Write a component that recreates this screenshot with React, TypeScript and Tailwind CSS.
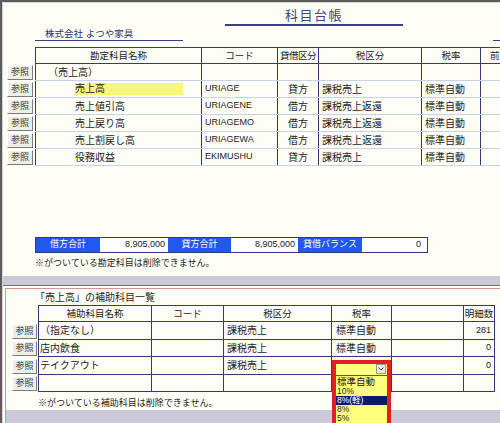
import React from "react";

const NAVY = "border-[#363a74]";

type MainRow = {
  name: string;
  code: string;
  side: string;
  tax: string;
  rate: string;
  indent: "group" | "item";
  highlight?: boolean;
};

const mainRows: MainRow[] = [
  { name: "（売上高）", code: "", side: "", tax: "", rate: "", indent: "group" },
  { name: "売上高", code: "URIAGE", side: "貸方", tax: "課税売上", rate: "標準自動", indent: "item", highlight: true },
  { name: "売上値引高", code: "URIAGENE", side: "借方", tax: "課税売上返還", rate: "標準自動", indent: "item" },
  { name: "売上戻り高", code: "URIAGEMO", side: "借方", tax: "課税売上返還", rate: "標準自動", indent: "item" },
  { name: "売上割戻し高", code: "URIAGEWA", side: "借方", tax: "課税売上返還", rate: "標準自動", indent: "item" },
  { name: "役務収益", code: "EKIMUSHU", side: "貸方", tax: "課税売上", rate: "標準自動", indent: "item" },
];

const subRows = [
  { name: "（指定なし）", code: "", tax: "課税売上", rate: "標準自動", count: "281", h: "h-[18px]" },
  { name: "店内飲食", code: "", tax: "課税売上", rate: "標準自動", count: "0", h: "h-[17px]" },
  { name: "テイクアウト", code: "", tax: "課税売上", rate: "", count: "0", h: "h-[18px]" },
  { name: "", code: "", tax: "", rate: "", count: "", h: "h-[17px]" },
];

const RefButton = ({ className }: { className: string }) => (
  <div
    className={`h-[15px] flex items-center justify-center bg-[#efeee9] border border-t-white border-l-white border-r-[#7a7a7a] border-b-[#7a7a7a] text-[9px] text-[#333] leading-none ${className}`}
  >
    参照
  </div>
);

const App = () => {
  return (
    <div className="relative w-[500px] h-[423px] overflow-hidden border-l-2 border-t-2 border-[#5c5c5c] bg-[#fffef6] text-[#222] font-['Liberation_Sans','Noto_Sans_CJK_JP',sans-serif]">
      <div className="h-full border-l border-t border-[#d6d6d6] flex flex-col">
        {/* upper panel */}
        <div className="flex flex-col">
          <div className="ml-[222px] w-[178px] pt-[4px] h-[23px] border-b-2 border-[#3a3e78] text-center text-[13px] leading-[17px] tracking-[1.5px] text-[#3d4284]">
            科目台帳
          </div>
          <div className="flex mt-[3px]">
            <div className="ml-[32px] w-[148px] h-[12px] border-b border-[#3a3e78] pl-[10px] text-[9.5px] leading-[10px] text-[#2c2f6e]">
              株式会社 よつや家具
            </div>
            <div className="ml-auto w-[7px] border-b border-[#3a3e78]" />
          </div>

          {/* main table */}
          <div className="mt-[6px] flex flex-col text-[10px]">
            <div className="flex h-[17px]">
              <div className="w-[32px] shrink-0" />
              <div className={`flex border-t border-b ${NAVY} text-[9.5px]`}>
                {[
                  ["勘定科目名称", "w-[167px] border-l"],
                  ["コード", "w-[76px]"],
                  ["貸借区分", "w-[41px] tracking-[-0.5px]"],
                  ["税区分", "w-[103px]"],
                  ["税率", "w-[59px]"],
                  ["前", "w-[40px] justify-start pl-[9px]"],
                ].map(([label, w]) => (
                  <div
                    key={label}
                    className={`${w} shrink-0 border-r ${NAVY} flex items-center justify-center leading-none whitespace-nowrap overflow-hidden`}
                  >
                    {label}
                  </div>
                ))}
              </div>
            </div>
            {mainRows.map((r, i) => (
              <div key={i} className="flex h-[17px]">
                <div className="w-[32px] shrink-0 flex items-center">
                  <RefButton className="ml-[4px] w-[26px]" />
                </div>
                <div className="flex border-b border-[#c3d3ec]">
                  <div className={`w-[167px] shrink-0 border-l border-r ${NAVY} flex items-center`}>
                    {r.highlight ? (
                      <span className="ml-[39px] w-[108px] h-[12px] bg-[#f8f878] leading-[12px]">{r.name}</span>
                    ) : (
                      <span className={r.indent === "group" ? "ml-[12px]" : "ml-[39px]"}>{r.name}</span>
                    )}
                  </div>
                  <div className={`w-[76px] shrink-0 border-r ${NAVY} flex items-center pl-[3px] text-[9px]`}>{r.code}</div>
                  <div className={`w-[41px] shrink-0 border-r ${NAVY} flex items-center justify-center`}>{r.side}</div>
                  <div className={`w-[103px] shrink-0 border-r ${NAVY} flex items-center pl-[3px]`}>{r.tax}</div>
                  <div className={`w-[59px] shrink-0 border-r ${NAVY} flex items-center pl-[3px]`}>{r.rate}</div>
                  <div className={`w-[40px] shrink-0 border-r ${NAVY}`} />
                </div>
              </div>
            ))}
          </div>

          {/* totals */}
          <div className={`ml-[32px] mt-[71px] w-[393px] h-[16px] flex border ${NAVY} text-[9px]`}>
            <div className="w-[64px] bg-[#2159ef] text-white flex items-center justify-center">借方合計</div>
            <div className="w-[68px] bg-white flex items-center justify-end pr-[3px]">8,905,000</div>
            <div className="w-[63px] bg-[#2159ef] text-white flex items-center justify-center">貸方合計</div>
            <div className="w-[67px] bg-white flex items-center justify-end pr-[3px]">8,905,000</div>
            <div className="w-[64px] bg-[#2159ef] text-white flex items-center justify-center">貸借バランス</div>
            <div className="flex-1 bg-white flex items-center justify-end pr-[6px]">0</div>
          </div>
          <div className="ml-[32px] mt-[4px] h-[12px] text-[9px] leading-[12px]">※がついている勘定科目は削除できません。</div>
          <div className="mt-[7px] h-[10px] bg-[#cbc9d8] border-b border-[#707070]" />
        </div>

        {/* lower panel */}
        <div className="mt-[2px] ml-[2px] flex-1 flex flex-col border-l border-t border-[#d49494]">
          <div className="ml-[29px] mt-[2px] h-[13px] text-[10px] leading-[13px]">「売上高」の補助科目一覧</div>
          <div className="mt-[1px] flex flex-col text-[10px]">
            <div className="flex h-[17px]">
              <div className="w-[32px] shrink-0" />
              <div className={`flex border-t border-b ${NAVY}`}>
                {[
                  ["補助科目名称", "w-[114px] border-l"],
                  ["コード", "w-[72px]"],
                  ["税区分", "w-[108px]"],
                  ["税率", "w-[60px]"],
                  ["", "w-[72px]"],
                  ["明細数", "w-[31px]"],
                ].map(([label, w], i) => (
                  <div
                    key={i}
                    className={`${w} shrink-0 border-r ${NAVY} flex items-center justify-center leading-none whitespace-nowrap overflow-hidden text-[9.5px]`}
                  >
                    {label}
                  </div>
                ))}
              </div>
            </div>
            {subRows.map((r, i) => (
              <div key={i} className={`flex ${r.h}`}>
                <div className="w-[32px] shrink-0 flex items-center">
                  <RefButton className="ml-[6px] w-[25px]" />
                </div>
                <div className={`flex border-b ${NAVY}`}>
                  <div className={`w-[114px] shrink-0 border-l border-r ${NAVY} flex items-center pl-[1px]`}>{r.name}</div>
                  <div className={`w-[72px] shrink-0 border-r ${NAVY} flex items-center pl-[2px]`}>{r.code}</div>
                  <div className={`w-[108px] shrink-0 border-r ${NAVY} flex items-center pl-[3px]`}>{r.tax}</div>
                  <div className={`w-[60px] shrink-0 border-r ${NAVY} flex items-center pl-[4px]`}>{r.rate}</div>
                  <div className={`w-[72px] shrink-0 border-r ${NAVY}`} />
                  <div className={`w-[31px] shrink-0 border-r ${NAVY} flex items-center justify-end pr-[3px] text-[9px]`}>{r.count}</div>
                </div>
              </div>
            ))}
          </div>
          <div className="ml-[32px] mt-[5px] h-[12px] text-[9px] leading-[12px]">※がついている補助科目は削除できません。</div>
          <div className="mt-[1px] flex-1 bg-[#cbc9d8]" />
        </div>
      </div>

      {/* open tax rate dropdown */}
      <div className="absolute left-[330px] top-[358px] w-[59px] h-[70px] border-4 border-[#e21f26] bg-[#ffff80] flex flex-col">
        <div className="h-[12px] flex justify-end border-b border-[#555]">
          <div className="w-[10px] h-[10px] mr-[1px] bg-[#e8e8e8] border border-[#999] flex items-center justify-center">
            <svg width="6" height="4" viewBox="0 0 6 4">
              <path d="M0.5 0.5 L3 3 L5.5 0.5" fill="none" stroke="#555" strokeWidth="1" />
            </svg>
          </div>
        </div>
        <div className="flex flex-col text-[8.5px] leading-[9px] pt-[1px]">
          <div className="h-[10px] pl-[1px] text-[9.5px] leading-[10px]">標準自動</div>
          <div className="h-[9px] pl-[1px]">10%</div>
          <div className="h-[9px] pl-[1px] bg-[#0c1a6a] text-white">8%(軽)</div>
          <div className="h-[9px] pl-[1px]">8%</div>
          <div className="h-[9px] pl-[1px]">5%</div>
        </div>
      </div>
    </div>
  );
};

export default App;
